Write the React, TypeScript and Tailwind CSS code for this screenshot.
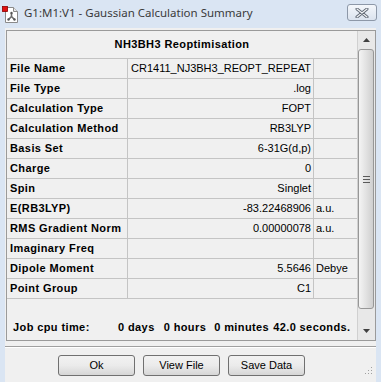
import React from "react";

const rows: [string, string, string][] = [
  ["File Name", "CR1411_NJ3BH3_REOPT_REPEAT", ""],
  ["File Type", ".log", ""],
  ["Calculation Type", "FOPT", ""],
  ["Calculation Method", "RB3LYP", ""],
  ["Basis Set", "6-31G(d,p)", ""],
  ["Charge", "0", ""],
  ["Spin", "Singlet", ""],
  ["E(RB3LYP)", "-83.22468906", "a.u."],
  ["RMS Gradient Norm", "0.00000078", "a.u."],
  ["Imaginary Freq", "", ""],
  ["Dipole Moment", "5.5646", "Debye"],
  ["Point Group", "C1", ""],
];

function AppIcon() {
  return (
    <svg width="18" height="18" viewBox="0 0 18 18">
      <path d="M3.5 2.5 H11.5 L15.5 6.5 V17.5 H3.5 Z" fill="#fff" stroke="#8a8a8a" />
      <path d="M11.5 2.5 V6.5 H15.5" fill="#e8e8e8" stroke="#8a8a8a" />
      <path d="M9.5 8 V11.5 M9.5 11.5 L6.5 14.5 M9.5 11.5 L12.5 14.5" stroke="#6b6b6b" strokeWidth="1.6" fill="none" />
      <circle cx="9.5" cy="8" r="1.2" fill="#555" />
      <circle cx="6.5" cy="14.5" r="1.2" fill="#555" />
      <circle cx="12.5" cy="14.5" r="1.2" fill="#555" />
      <rect x="0.5" y="1.5" width="5" height="5" fill="#e01010" stroke="#8a0000" strokeWidth="0.8" />
    </svg>
  );
}

function CloseButton() {
  return (
    <div className="w-[30px] h-[17px] rounded-[3px] border border-[#8d98a8] bg-gradient-to-b from-[#f4f7fb] to-[#dbe3ee] flex items-center justify-center">
      <svg width="14" height="10" viewBox="0 0 14 10">
        <path d="M2 1 L12 9 M12 1 L2 9" stroke="#5c6470" strokeWidth="3" strokeLinecap="round" />
        <path d="M2 1 L12 9 M12 1 L2 9" stroke="#f2f4f7" strokeWidth="1.2" strokeLinecap="round" />
      </svg>
    </div>
  );
}

function Btn({ label }: { label: string }) {
  return (
    <div className="w-[77px] h-[21px] rounded-[3px] border border-[#707070] bg-gradient-to-b from-[#f2f2f2] via-[#ebebeb] to-[#d6d6d6] flex items-center justify-center text-[11px] text-black">
      {label}
    </div>
  );
}

export default function App() {
  return (
    <div className="w-[381px] h-[382px] bg-[#dae5f3] flex flex-col overflow-hidden [font-family:'Liberation_Sans',Arial,sans-serif]">
      {/* title bar */}
      <div className="h-[28px] flex items-start pt-[4px] pl-[2px] pr-[4px]">
        <div className="mt-[1px]">
          <AppIcon />
        </div>
        <div className="ml-[4px] mt-[1px] text-[11.5px] text-[#3b3b3b] [font-family:'Noto_Sans',sans-serif] leading-[16px]">
          G1:M1:V1 - Gaussian Calculation Summary
        </div>
        <div className="ml-auto">
          <CloseButton />
        </div>
      </div>

      {/* client */}
      <div className="flex-1 mx-[5px] bg-[#f0f0f0] flex flex-col">
        <div className="mt-[2px] ml-[1px] w-[370px] h-[311px] border border-[#9a9a9a] flex">
          {/* content */}
          <div className="w-[350px] flex flex-col">
            <div className="h-[28px] border-b border-[#c4c4c4] flex items-center justify-center text-[11px] font-bold tracking-[0.4px] text-black">
              NH3BH3 Reoptimisation
            </div>
            {rows.map(([label, value, unit]) => (
              <div key={label} className="h-[20px] flex border-b border-[#c4c4c4] text-[11px] text-black">
                <div className="w-[121px] border-r border-[#c4c4c4] flex items-center pl-[3px] font-bold tracking-[0.4px]">
                  {label}
                </div>
                <div className="w-[186px] border-r border-[#c4c4c4] flex items-center justify-end pr-[2px]">
                  {value}
                </div>
                <div className="flex-1 flex items-center pl-[2px]">{unit}</div>
              </div>
            ))}
            <div className="mt-[18px] h-[20px] flex items-center text-[11px] font-bold tracking-[0.4px] text-black whitespace-pre">
              <span className="ml-[6px] w-[105px]">Job cpu time:</span>
              <span>0 days</span>
              <span className="ml-[9px]">0 hours</span>
              <span className="ml-[8px]">0 minutes</span>
              <span className="ml-[4px]">42.0 seconds.</span>
            </div>
          </div>
          {/* scrollbar */}
          <div className="w-[18px] flex flex-col bg-[#e8e8e8] border-l border-[#d0d0d0]">
            <div className="h-[18px] flex items-center justify-center">
              <svg width="7" height="4" viewBox="0 0 7 4">
                <path d="M3.5 0 L7 4 H0 Z" fill="#404040" />
              </svg>
            </div>
            <div className="h-[260px] w-[16px] rounded-[3px] border border-[#979797] bg-gradient-to-r from-[#f4f4f4] via-[#e2e2e2] to-[#cfcfcf] flex flex-col items-center justify-center gap-[2px]">
              <div className="w-[7px] h-[1px] bg-[#5a5a5a]" />
              <div className="w-[7px] h-[1px] bg-[#5a5a5a]" />
              <div className="w-[7px] h-[1px] bg-[#5a5a5a]" />
            </div>
            <div className="flex-1" />
            <div className="h-[18px] flex items-center justify-center">
              <svg width="7" height="4" viewBox="0 0 7 4">
                <path d="M0 0 H7 L3.5 4 Z" fill="#404040" />
              </svg>
            </div>
          </div>
        </div>

        {/* separator */}
        <div className="mt-[5px] h-[1px] bg-[#a0a0a0]" />
        <div className="h-[1px] bg-white" />

        {/* buttons */}
        <div className="mt-[7px] flex gap-[8px] pl-[53px]">
          <Btn label="Ok" />
          <Btn label="View File" />
          <Btn label="Save Data" />
        </div>
        <div className="flex justify-end pr-[3px] mt-[-9px]">
          <svg width="8" height="8" viewBox="0 0 8 8">
            <rect x="6" y="0" width="1" height="1" fill="#a0a0a0" />
            <rect x="3" y="3" width="1" height="1" fill="#a0a0a0" />
            <rect x="6" y="3" width="1" height="1" fill="#a0a0a0" />
            <rect x="0" y="6" width="1" height="1" fill="#a0a0a0" />
            <rect x="3" y="6" width="1" height="1" fill="#a0a0a0" />
            <rect x="6" y="6" width="1" height="1" fill="#a0a0a0" />
          </svg>
        </div>
      </div>
    </div>
  );
}
